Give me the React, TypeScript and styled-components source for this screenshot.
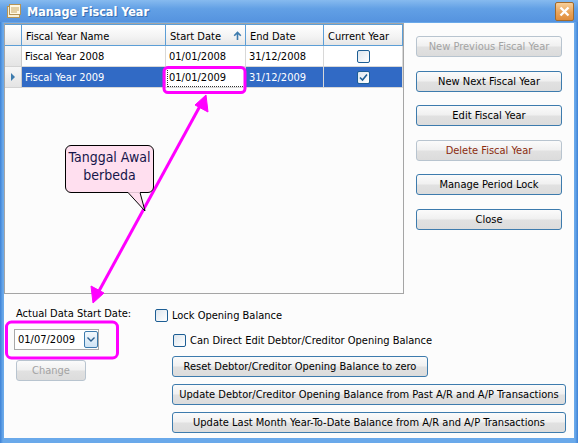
import React from "react";
import styled, { createGlobalStyle } from "styled-components";

const GlobalStyle = createGlobalStyle`
  html, body {
    margin: 0;
    padding: 0;
    background: #fff;
  }
  body {
    font-family: "DejaVu Sans Condensed", "Liberation Sans", sans-serif;
    font-size: 11px;
  }
`;

const Window = styled.div`
  position: relative;
  width: 578px;
  height: 443px;
  display: flex;
  flex-direction: column;
  background: linear-gradient(90deg, #3e82d6 0, #6aa9ea 3px, #6aa9ea 575px, #3e82d6 578px);
  overflow: hidden;
  font-family: "DejaVu Sans Condensed", "Liberation Sans", sans-serif;
  font-size: 11px;
`;

const TitleBar = styled.div`
  height: 22px;
  display: flex;
  align-items: center;
  padding: 0 4px 0 6px;
  background: linear-gradient(180deg, #86baef 0%, #62a0e5 40%, #5593df 100%);
`;

const TitleIcon = styled.svg`
  width: 16px;
  height: 16px;
  flex: none;
`;

const TitleText = styled.span`
  margin-left: 5px;
  flex: 1;
  color: #fff;
  font-family: "DejaVu Sans Condensed", "DejaVu Sans", sans-serif;
  font-weight: bold;
  font-size: 12.5px;
  text-shadow: 1px 1px 0 #3a6fb0;
`;

const CloseButton = styled.div`
  width: 17px;
  height: 17px;
  margin-top: 1px;
  border: 1px solid #a36a2a;
  border-radius: 2px;
  background: linear-gradient(180deg, #f8cf9a 0%, #e9a45a 55%, #df8d3d 100%);
  display: flex;
  align-items: center;
  justify-content: center;
`;

const Client = styled.div`
  flex: 1;
  margin: 1px 4px 5px 4px;
  background: #fcfcfc;
  display: flex;
  flex-direction: column;
`;

const TopRow = styled.div`
  display: flex;
`;

const Grid = styled.div`
  width: 398px;
  height: 269px;
  border: 1px solid #a5a5a5;
  background: #fcfcfc;
`;

const GridRow = styled.div<{ $head?: boolean }>`
  display: grid;
  grid-template-columns: 17px 144px 80px 78px 79px;
  height: ${(p) => (p.$head ? 22 : 21)}px;
`;

const HeaderCell = styled.div<{ $first?: boolean }>`
  display: flex;
  align-items: center;
  padding-left: ${(p) => (p.$first ? "0" : "4px")};
  padding-top: 2px;
  border-right: 1px solid #5c9ed6;
  border-bottom: 1px solid #5c9ed6;
  border-top: 1px solid #5c9ed6;
  background: linear-gradient(180deg, #ffffff 0%, #f3f3f3 60%, #e6e6e6 100%);
  color: #000;
  white-space: nowrap;
  box-sizing: border-box;
  justify-content: ${(p) => (p.$first ? "center" : "flex-start")};
`;

const RowHead = styled.div`
  background: linear-gradient(180deg, #f6f6f6, #e4e4e4);
  border-right: 1px solid #c9c9c9;
  border-bottom: 1px solid #d3d3d3;
  display: flex;
  align-items: center;
  justify-content: center;
`;

const Cell = styled.div<{ $selected?: boolean; $focus?: boolean; $center?: boolean }>`
  display: flex;
  align-items: center;
  justify-content: ${(p) => (p.$center ? "center" : "flex-start")};
  padding-left: ${(p) => (p.$center ? "0" : "3px")};
  border-right: 1px solid #d8d8d8;
  border-bottom: 1px solid #d8d8d8;
  background: ${(p) => (p.$focus ? "#fff" : p.$selected ? "#316ac5" : "#fff")};
  color: ${(p) => (p.$focus ? "#000" : p.$selected ? "#fff" : "#000")};
  outline: ${(p) => (p.$focus ? "1px dotted #333" : "none")};
  outline-offset: -2px;
  white-space: nowrap;
`;

const CheckBox = styled.span`
  width: 11px;
  height: 11px;
  border: 1px solid #1d5e94;
  border-radius: 2px;
  background: linear-gradient(135deg, #dde6ee 0%, #ffffff 100%);
  display: inline-flex;
  align-items: center;
  justify-content: center;
  flex: none;
`;

const ButtonColumn = styled.div`
  display: flex;
  flex-direction: column;
  gap: 13.6px;
  padding: 13px 0 0 12px;
`;

const Button = styled.div<{ $disabled?: boolean; $danger?: boolean; $width?: number }>`
  width: ${(p) => p.$width ?? 146}px;
  height: 21px;
  box-sizing: border-box;
  border: 1px solid ${(p) => (p.$disabled || p.$danger ? "#b8c4cf" : "#3d7bad")};
  border-radius: 3px;
  background: linear-gradient(180deg, #fbfbfb 0%, #f0f0f0 48%, #e1e1e1 52%, #dcdcdc 100%);
  color: ${(p) => (p.$disabled ? "#a3a3a3" : p.$danger ? "#8b2c0e" : "#000")};
  display: flex;
  align-items: center;
  justify-content: center;
  white-space: nowrap;
`;

const BottomRow = styled.div`
  display: flex;
  padding-top: 13px;
`;

const LeftCol = styled.div`
  width: 141px;
  padding-left: 12px;
  box-sizing: border-box;
  display: flex;
  flex-direction: column;
`;

const FieldLabel = styled.div`
  color: #000;
  height: 14px;
`;

const DateBox = styled.div`
  margin-top: 8px;
  margin-left: -2px;
  width: 85px;
  height: 21px;
  box-sizing: border-box;
  border: 1px solid #a9a9a9;
  background: #fff;
  display: flex;
  align-items: center;
  padding-left: 3px;
  gap: 9px;
`;

const DropButton = styled.span`
  width: 13px;
  height: 15px;
  border: 1px solid #3d7bad;
  border-radius: 2px;
  background: linear-gradient(180deg, #f2f8fd, #cfe3f4);
  display: flex;
  align-items: center;
  justify-content: center;
`;

const ChangeWrap = styled.div`
  margin-top: 10px;
`;

const RightCol = styled.div`
  display: flex;
  flex-direction: column;
  padding-left: 10px;
  padding-top: 1px;
`;

const CheckRow = styled.label<{ $indent?: number; $gapTop?: number }>`
  display: flex;
  align-items: center;
  gap: 4px;
  margin-left: ${(p) => p.$indent ?? 0}px;
  margin-top: ${(p) => p.$gapTop ?? 0}px;
  height: 14px;
  color: #000;
`;

const ActionStack = styled.div`
  display: flex;
  flex-direction: column;
  gap: 7px;
  margin-left: 17px;
  margin-top: 9px;
`;

const Overlay = styled.svg`
  position: absolute;
  left: 0;
  top: 0;
  pointer-events: none;
`;

const Callout = styled.div`
  position: absolute;
  left: 65px;
  top: 145px;
  width: 89px;
  height: 48px;
  border: 1px solid #000;
  border-radius: 6px;
  background: #ffdfef;
  color: #16164a;
  font-family: "DejaVu Sans Condensed", "DejaVu Sans", sans-serif;
  font-size: 14px;
  line-height: 18px;
  text-align: center;
  padding-top: 2px;
  box-sizing: border-box;
`;

const CalloutTail = styled.svg`
  position: absolute;
  left: 125px;
  top: 191px;
`;

const Check = () => (
  <svg width="9" height="9" viewBox="0 0 9 9">
    <path d="M1 4.5 L3.5 7 L8 1.5" stroke="#1d5e94" strokeWidth="1.6" fill="none" />
  </svg>
);

const rows = [
  { name: "Fiscal Year 2008", start: "01/01/2008", end: "31/12/2008", current: false, selected: false },
  { name: "Fiscal Year 2009", start: "01/01/2009", end: "31/12/2009", current: true, selected: true },
];

export default function App() {
  return (
    <Window>
      <GlobalStyle />
      <TitleBar>
        <TitleIcon viewBox="0 0 16 16">
          <rect x="1.5" y="3.5" width="12" height="11" fill="#f7f0d8" stroke="#b69455" />
          <rect x="3.5" y="1.5" width="11" height="10" fill="#fff8e4" stroke="#b69455" />
          <path d="M5 5h8M5 7h8M5 9h6" stroke="#c9a865" />
        </TitleIcon>
        <TitleText>Manage Fiscal Year</TitleText>
        <CloseButton>
          <svg width="11" height="11" viewBox="0 0 11 11">
            <path d="M1.5 1.5 L9.5 9.5 M9.5 1.5 L1.5 9.5" stroke="#fff" strokeWidth="2.4" />
          </svg>
        </CloseButton>
      </TitleBar>
      <Client>
        <TopRow>
          <Grid>
            <GridRow $head>
              <HeaderCell $first />
              <HeaderCell>Fiscal Year Name</HeaderCell>
              <HeaderCell>
                Start Date
                <svg width="9" height="10" viewBox="0 0 9 10" style={{ marginLeft: 12 }}>
                  <path d="M4.5 1.5 L4.5 9 M1.2 4.8 L4.5 1.5 L7.8 4.8" stroke="#3d7bad" strokeWidth="1.6" fill="none" />
                </svg>
              </HeaderCell>
              <HeaderCell>End Date</HeaderCell>
              <HeaderCell>Current Year</HeaderCell>
            </GridRow>
            {rows.map((r) => (
              <GridRow key={r.name}>
                <RowHead>
                  {r.selected && (
                    <svg width="5" height="8" viewBox="0 0 5 8">
                      <path d="M0 0 L4 4 L0 8 Z" fill="#3d7bad" />
                    </svg>
                  )}
                </RowHead>
                <Cell $selected={r.selected}>{r.name}</Cell>
                <Cell $selected={r.selected} $focus={r.selected}>
                  {r.start}
                </Cell>
                <Cell $selected={r.selected}>{r.end}</Cell>
                <Cell $selected={r.selected} $center>
                  <CheckBox>{r.current && <Check />}</CheckBox>
                </Cell>
              </GridRow>
            ))}
          </Grid>
          <ButtonColumn>
            <Button $disabled>New Previous Fiscal Year</Button>
            <Button>New Next Fiscal Year</Button>
            <Button>Edit Fiscal Year</Button>
            <Button $danger>Delete Fiscal Year</Button>
            <Button>Manage Period Lock</Button>
            <Button>Close</Button>
          </ButtonColumn>
        </TopRow>
        <BottomRow>
          <LeftCol>
            <FieldLabel>Actual Data Start Date:</FieldLabel>
            <DateBox>
              01/07/2009
              <DropButton>
                <svg width="8" height="5" viewBox="0 0 8 5">
                  <path d="M0.5 0.5 L4 4 L7.5 0.5" stroke="#2b5f8e" strokeWidth="1.4" fill="none" />
                </svg>
              </DropButton>
            </DateBox>
            <ChangeWrap>
              <Button $disabled $width={70}>
                Change
              </Button>
            </ChangeWrap>
          </LeftCol>
          <RightCol>
            <CheckRow>
              <CheckBox />
              Lock Opening Balance
            </CheckRow>
            <CheckRow $indent={18} $gapTop={11}>
              <CheckBox />
              Can Direct Edit Debtor/Creditor Opening Balance
            </CheckRow>
            <ActionStack>
              <Button $width={256}>Reset Debtor/Creditor Opening Balance to zero</Button>
              <Button $width={394}>Update Debtor/Creditor Opening Balance from Past A/R and A/P Transactions</Button>
              <Button $width={394}>Update Last Month Year-To-Date Balance from A/R and A/P Transactions</Button>
            </ActionStack>
          </RightCol>
        </BottomRow>
      </Client>

      <Overlay width="578" height="443" viewBox="0 0 578 443">
        <rect x="164" y="67.5" width="81" height="25" rx="4" fill="none" stroke="#ff00ff" strokeWidth="3" />
        <rect x="6.5" y="322" width="111" height="36" rx="5" fill="none" stroke="#ff00ff" strokeWidth="3" />
        <line x1="200" y1="106" x2="99" y2="291" stroke="#ff00ff" strokeWidth="3" />
        <path d="M206 95 L208 112 L195 105 Z" fill="#ff00ff" stroke="#ff00ff" strokeWidth="1" />
        <path d="M93 303 L91 286 L104 293 Z" fill="#ff00ff" stroke="#ff00ff" strokeWidth="1" />
      </Overlay>
      <Callout>
        Tanggal Awal
        <br />
        berbeda
      </Callout>
      <CalloutTail width="24" height="22" viewBox="0 0 24 22">
        <path d="M3 1.5 L20 20 L15 1.5" fill="#ffdfef" stroke="#000" strokeWidth="1" />
        <path d="M3.5 1 L15 1" stroke="#ffdfef" strokeWidth="1.5" />
      </CalloutTail>
    </Window>
  );
}
